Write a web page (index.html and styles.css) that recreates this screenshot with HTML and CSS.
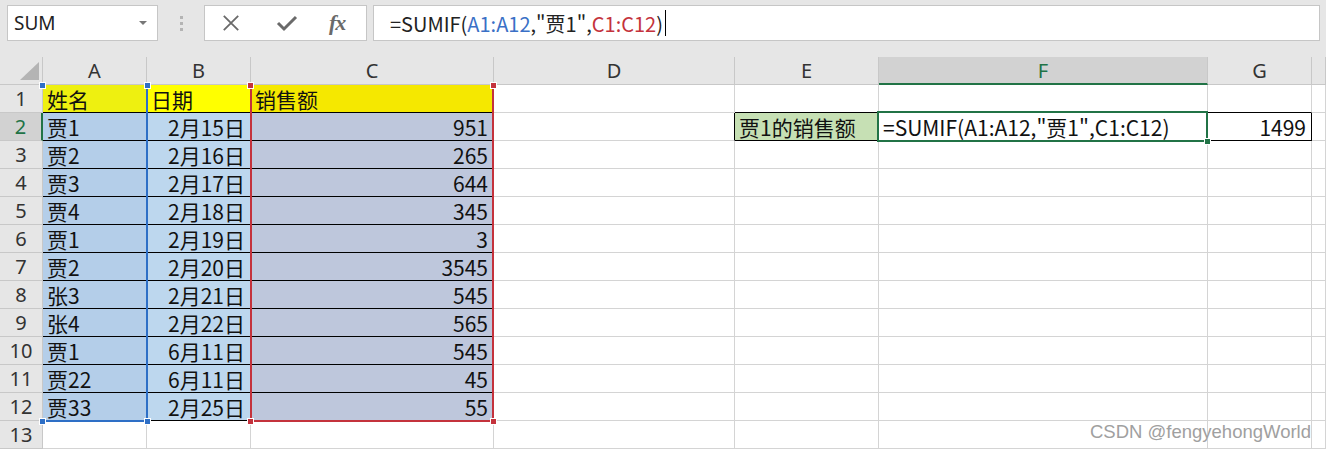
FILE: index.html
```html
<!DOCTYPE html>
<html lang="zh-CN">
<head>
    <meta charset="UTF-8">
    <title>SUMIF</title>
    <link rel="stylesheet" href="styles.css">
</head>
<body>
    <div class="toolbar">
        <div class="name-box">
            <span>SUM</span>
            <span class="drop"></span>
        </div>
        <div class="grip"><i></i><i></i><i></i></div>
        <div class="func-box">
            <svg class="ico x" width="20" height="20" viewBox="0 0 20 20"><path d="M2 2 L18 18 M18 2 L2 18" stroke="#6a6a6a" stroke-width="2" fill="none"/></svg>
            <svg class="ico ok" width="22" height="20" viewBox="0 0 22 20"><path d="M2 10 L8 16 L20 4" stroke="#6a6a6a" stroke-width="3" fill="none"/></svg>
            <span class="fx">fx</span>
        </div>
        <div class="formula">
            <span>=SUMIF(<span class="ref-blue">A1:A12</span>,"贾1",<span class="ref-red">C1:C12</span>)</span><span class="caret"></span>
        </div>
    </div>

    <div class="sheet">
        <div class="row head">
            <div class="corner"><span class="tri"></span></div>
            <div class="ch">A</div>
            <div class="ch">B</div>
            <div class="ch">C</div>
            <div class="ch">D</div>
            <div class="ch">E</div>
            <div class="ch sel">F</div>
            <div class="ch">G</div>
            <div class="ch"></div>
        </div>
        <div class="row">
            <div class="rh">1</div>
            <div class="c d ya">姓名</div>
            <div class="c d yb">日期</div>
            <div class="c d yc">销售额</div>
            <div class="c"></div>
            <div class="c bb"></div>
            <div class="c"></div>
            <div class="c bb"></div>
            <div class="c"></div>
        </div>
        <div class="row">
            <div class="rh sel">2</div>
            <div class="c d fa">贾1</div>
            <div class="c d fb r">2月15日</div>
            <div class="c d fc r">951</div>
            <div class="c br"></div>
            <div class="c e2">贾1的销售额</div>
            <div class="c br">=SUMIF(A1:A12,"贾1",C1:C12)</div>
            <div class="c d r">1499</div>
            <div class="c"></div>
        </div>
        <div class="row">
            <div class="rh">3</div>
            <div class="c d fa">贾2</div>
            <div class="c d fb r">2月16日</div>
            <div class="c d fc r">265</div>
            <div class="c"></div><div class="c"></div><div class="c"></div><div class="c"></div><div class="c"></div>
        </div>
        <div class="row">
            <div class="rh">4</div>
            <div class="c d fa">贾3</div>
            <div class="c d fb r">2月17日</div>
            <div class="c d fc r">644</div>
            <div class="c"></div><div class="c"></div><div class="c"></div><div class="c"></div><div class="c"></div>
        </div>
        <div class="row">
            <div class="rh">5</div>
            <div class="c d fa">贾4</div>
            <div class="c d fb r">2月18日</div>
            <div class="c d fc r">345</div>
            <div class="c"></div><div class="c"></div><div class="c"></div><div class="c"></div><div class="c"></div>
        </div>
        <div class="row">
            <div class="rh">6</div>
            <div class="c d fa">贾1</div>
            <div class="c d fb r">2月19日</div>
            <div class="c d fc r">3</div>
            <div class="c"></div><div class="c"></div><div class="c"></div><div class="c"></div><div class="c"></div>
        </div>
        <div class="row">
            <div class="rh">7</div>
            <div class="c d fa">贾2</div>
            <div class="c d fb r">2月20日</div>
            <div class="c d fc r">3545</div>
            <div class="c"></div><div class="c"></div><div class="c"></div><div class="c"></div><div class="c"></div>
        </div>
        <div class="row">
            <div class="rh">8</div>
            <div class="c d fa">张3</div>
            <div class="c d fb r">2月21日</div>
            <div class="c d fc r">545</div>
            <div class="c"></div><div class="c"></div><div class="c"></div><div class="c"></div><div class="c"></div>
        </div>
        <div class="row">
            <div class="rh">9</div>
            <div class="c d fa">张4</div>
            <div class="c d fb r">2月22日</div>
            <div class="c d fc r">565</div>
            <div class="c"></div><div class="c"></div><div class="c"></div><div class="c"></div><div class="c"></div>
        </div>
        <div class="row">
            <div class="rh">10</div>
            <div class="c d fa">贾1</div>
            <div class="c d fb r">6月11日</div>
            <div class="c d fc r">545</div>
            <div class="c"></div><div class="c"></div><div class="c"></div><div class="c"></div><div class="c"></div>
        </div>
        <div class="row">
            <div class="rh">11</div>
            <div class="c d fa">贾22</div>
            <div class="c d fb r">6月11日</div>
            <div class="c d fc r">45</div>
            <div class="c"></div><div class="c"></div><div class="c"></div><div class="c"></div><div class="c"></div>
        </div>
        <div class="row">
            <div class="rh">12</div>
            <div class="c d fa">贾33</div>
            <div class="c d fb r">2月25日</div>
            <div class="c d fc r">55</div>
            <div class="c"></div><div class="c"></div><div class="c"></div><div class="c"></div><div class="c"></div>
        </div>
        <div class="row">
            <div class="rh">13</div>
            <div class="c"></div><div class="c"></div><div class="c"></div><div class="c"></div>
            <div class="c"></div><div class="c"></div><div class="c"></div><div class="c"></div>
        </div>

        <!-- formula reference highlights -->
        <div class="ref blue-box">
            <span class="h tl"></span><span class="h tr"></span><span class="h bl"></span><span class="h br-h"></span>
        </div>
        <div class="ref red-box">
            <span class="h tl"></span><span class="h tr"></span><span class="h bl"></span><span class="h br-h"></span>
        </div>
        <div class="active"><span class="fill-handle"></span></div>

        <div class="watermark">CSDN @fengyehongWorld</div>
    </div>
</body>
</html>
```

FILE: styles.css
```css
body {
    margin: 0;
    background-color: #fff;
    font-family: "Noto Sans CJK SC", sans-serif;
    overflow: hidden;
}

/* formula bar */
.toolbar {
    display: flex;
    align-items: flex-start;
    height: 57px;
    padding-top: 5px;
    box-sizing: border-box;
    background-color: #e6e6e6;
}
.name-box {
    margin-left: 7px;
    width: 151px;
    height: 36px;
    box-sizing: border-box;
    background-color: #fff;
    border: 1px solid #c6c6c6;
    display: flex;
    align-items: center;
    justify-content: space-between;
    padding: 0 10px 0 6px;
    font-family: "Noto Sans", sans-serif;
    font-size: 19px;
    color: #222;
}
.drop {
    width: 0;
    height: 0;
    border-left: 4px solid transparent;
    border-right: 4px solid transparent;
    border-top: 4px solid #777;
}
.grip {
    width: 46px;
    height: 36px;
    display: flex;
    flex-direction: column;
    align-items: center;
    justify-content: center;
    gap: 3px;
}
.grip i {
    width: 3px;
    height: 3px;
    background-color: #b4b4b4;
}
.func-box {
    width: 163px;
    height: 36px;
    box-sizing: border-box;
    background-color: #fff;
    border: 1px solid #c6c6c6;
    display: flex;
    align-items: center;
}
.x {
    margin-left: 17px;
    width: 18px;
    height: 18px;
}
.ok {
    margin-left: 36px;
}
.fx {
    margin-left: 31px;
    font-family: "Liberation Serif", serif;
    font-style: italic;
    font-weight: bold;
    font-size: 22px;
    color: #6a6a6a;
    letter-spacing: -1px;
}
.formula {
    flex: 1;
    margin-left: 6px;
    margin-right: 6px;
    height: 36px;
    box-sizing: border-box;
    background-color: #fff;
    border: 1px solid #c6c6c6;
    display: flex;
    align-items: center;
    padding-left: 16px;
    font-size: 20px;
    color: #222;
}
.ref-blue {
    color: #3a70c6;
}
.ref-red {
    color: #c4323c;
}
.caret {
    width: 1px;
    height: 26px;
    background-color: #000;
    margin-left: 2px;
}

/* sheet */
.sheet {
    position: relative;
}
.row {
    display: grid;
    grid-template-columns: 43px 104px 104px 243px 241px 144px 329px 104px 1fr;
    height: 28px;
}
.row > div {
    box-sizing: border-box;
    height: 28px;
    border-right: 1px solid #d4d4d4;
    border-bottom: 1px solid #d4d4d4;
}
.head > div {
    background-color: #e6e6e6;
    border-right-color: #c8c8c8;
    border-bottom-color: #c8c8c8;
}
.corner {
    position: relative;
}
.tri {
    position: absolute;
    right: 3px;
    bottom: 4px;
    width: 0;
    height: 0;
    border-left: 19px solid transparent;
    border-bottom: 18px solid #b4b4b4;
}
.ch {
    text-align: center;
    font-family: "Noto Sans", sans-serif;
    font-size: 20px;
    line-height: 27px;
    color: #333;
}
.head > .ch.sel {
    background-color: #d2d2d2;
    border-bottom: 2px solid #217346;
    color: #217346;
}
.rh {
    background-color: #e6e6e6;
    border-right-color: #c8c8c8 !important;
    border-bottom-color: #c8c8c8 !important;
    text-align: center;
    font-family: "Noto Sans", sans-serif;
    font-size: 20px;
    line-height: 28px;
    color: #333;
}
.rh.sel {
    background-color: #d2d2d2;
    border-right: 2px solid #217346 !important;
    color: #217346;
}
.c {
    font-size: 21px;
    line-height: 29px;
    padding: 0 4px 0 4px;
    color: #111;
    white-space: nowrap;
    overflow: visible;
}
.r {
    text-align: right;
    padding-right: 5px;
}
.d {
    border-right-color: #000 !important;
    border-bottom-color: #000 !important;
}
.bb {
    border-bottom-color: #000 !important;
}
.br {
    border-right-color: #000 !important;
}
.ya { background-color: #eef010; }
.yb { background-color: #ffff00; }
.yc { background-color: #f5e800; }
.fa { background-color: #b4cee9; }
.fb { background-color: #bdd7ee; }
.fc { background-color: #bec7dc; }
.e2 {
    background-color: #c6e0b4;
    border-right-color: #000 !important;
    border-bottom-color: #000 !important;
}

/* overlays */
.ref {
    position: absolute;
    top: 28px;
    height: 337px;
    box-sizing: border-box;
}
.blue-box {
    left: 43px;
    width: 105px;
    border-right: 2px solid #2e6fc6;
    border-bottom: 2px solid #2e6fc6;
}
.red-box {
    left: 250px;
    width: 244px;
    border-left: 2px solid #c4323c;
    border-right: 2px solid #c4323c;
    border-bottom: 2px solid #c4323c;
}
.h {
    position: absolute;
    width: 5px;
    height: 5px;
    border: 1px solid #fff;
}
.blue-box .h { background-color: #2e6fc6; }
.red-box .h { background-color: #c4323c; }
.blue-box .tl { left: -4px; top: -3px; }
.blue-box .bl { left: -4px; bottom: -5px; }
.red-box .tl { left: -5px; top: -3px; }
.red-box .bl { left: -5px; bottom: -5px; }
.tr { right: -5px; top: -3px; }
.br-h { right: -5px; bottom: -5px; }
.active {
    position: absolute;
    left: 877px;
    top: 54px;
    width: 331px;
    height: 31px;
    box-sizing: border-box;
    border: 2px solid #217346;
}
.fill-handle {
    position: absolute;
    right: -5px;
    bottom: -5px;
    width: 5px;
    height: 5px;
    background-color: #217346;
    border: 1px solid #fff;
}
.watermark {
    position: absolute;
    right: 15px;
    top: 364px;
    font-family: "Liberation Sans", sans-serif;
    font-size: 18.5px;
    color: #a0a0a0;
    text-shadow: 0 0 1px #fff;
}
```
